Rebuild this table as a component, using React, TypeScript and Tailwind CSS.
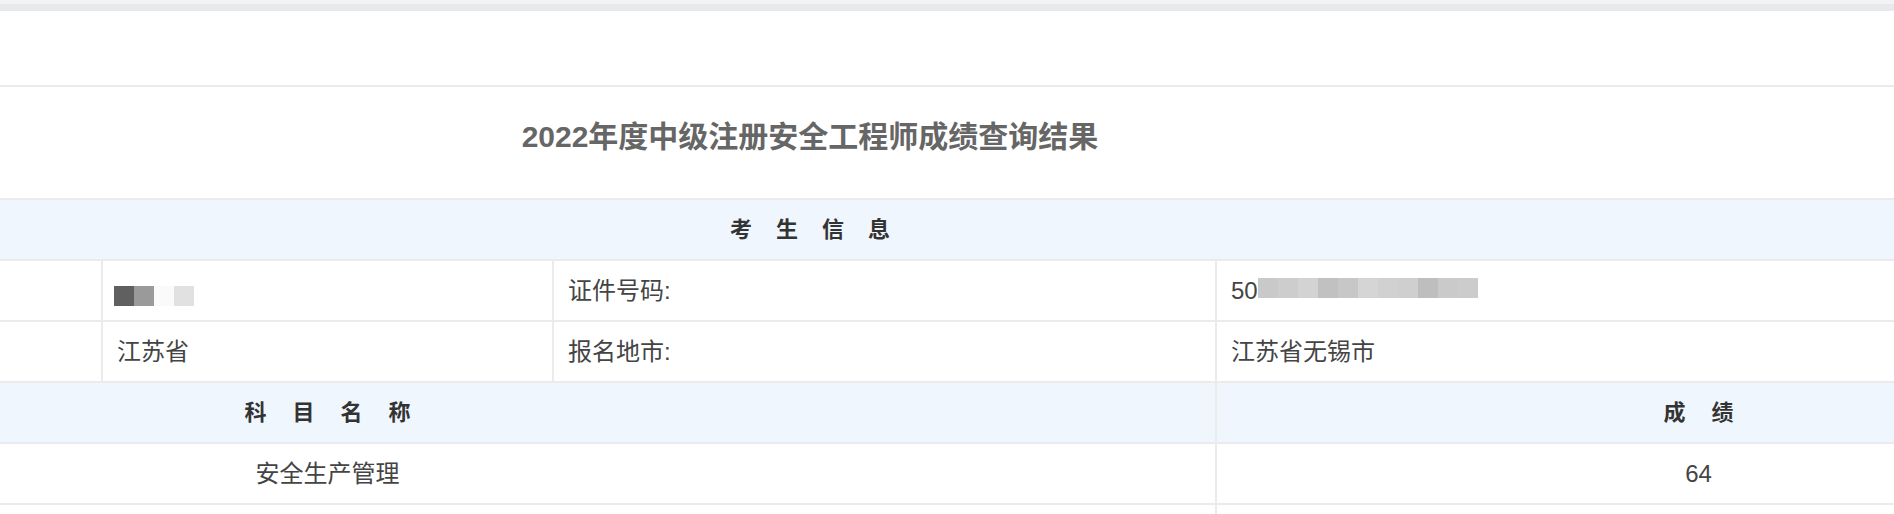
import React from 'react';

const nameBlocks = ['#606060', '#9a9a9a', '#fafafa', '#e1e1e1'];
const idBlocks = ['#c9c9c9', '#cdcdcd', '#d3d3d3', '#c1c1c1', '#c7c7c7', '#d5d5d5', '#d1d1d1', '#cfcfcf', '#bebebe', '#cacaca', '#cccccc'];

const Cell: React.FC<{ children?: React.ReactNode; first?: boolean }> = ({ children, first }) => (
  <div className={`flex items-center pl-[14px] text-[24px] leading-none text-[#444] ${first ? '' : 'border-l-2 border-[#ebebeb]'}`}>
    {children}
  </div>
);

const Blocks: React.FC<{ colors: string[] }> = ({ colors }) => (
  <div className="flex">
    {colors.map((c, i) => (
      <span key={i} className="block w-[20px] h-[20px]" style={{ backgroundColor: c }} />
    ))}
  </div>
);

const scores = [
  { subject: '安全生产管理', score: '64' },
  { subject: '', score: '' },
];

export default function App() {
  return (
    <div className="w-full h-[514px] overflow-hidden bg-white font-['Liberation_Sans','Noto_Sans_CJK_SC',sans-serif]">
      <div className="h-[4px] bg-[#f3f3f3]" />
      <div className="h-[7px] bg-[#e8e9eb]" />

      {/* table is wider than the window and centred on x=810 */}
      <div className="ml-[-560px] w-[2740px]">
        <div className="h-[76px] border-b-2 border-[#ebebeb]" />

        <div className="h-[113px] border-b-2 border-[#ebebeb] flex items-center justify-center pb-[12px]">
          <h1 className="text-[30px] leading-none font-bold text-[#666]">2022年度中级注册安全工程师成绩查询结果</h1>
        </div>

        {/* 考生信息 */}
        <div className="h-[61px] border-b-2 border-[#ebebeb] bg-[#eff6fd] flex items-center justify-center">
          <span className="text-[22px] leading-none font-bold text-[#333] tracking-[24px] pl-[24px]">考生信息</span>
        </div>

        <div className="grid grid-cols-[661px_451px_663px_965px] h-[61px] border-b-2 border-[#ebebeb]">
          <Cell first />
          <Cell>
            <div className="-ml-[3px] mt-[11px]">
              <Blocks colors={nameBlocks} />
            </div>
          </Cell>
          <Cell>证件号码:</Cell>
          <Cell>
            <span>50</span>
            <div className="-mt-[5px]">
              <Blocks colors={idBlocks} />
            </div>
          </Cell>
        </div>

        <div className="grid grid-cols-[661px_451px_663px_965px] h-[61px] border-b-2 border-[#ebebeb]">
          <Cell first />
          <Cell>江苏省</Cell>
          <Cell>报名地市:</Cell>
          <Cell>江苏省无锡市</Cell>
        </div>

        {/* 成绩 */}
        <div className="grid grid-cols-[1775px_965px] h-[61px] border-b-2 border-[#ebebeb] bg-[#eff6fd]">
          <div className="flex items-center justify-center">
            <span className="text-[22px] leading-none font-bold text-[#333] tracking-[26px] pl-[26px]">科目名称</span>
          </div>
          <div className="flex items-center justify-center border-l-2 border-[#ebebeb]">
            <span className="text-[22px] leading-none font-bold text-[#333] tracking-[26px] pl-[26px]">成绩</span>
          </div>
        </div>

        {scores.map((s, i) => (
          <div key={i} className="grid grid-cols-[1775px_965px] h-[61px] border-b-2 border-[#ebebeb]">
            <div className="flex items-center justify-center text-[24px] leading-none text-[#444]">{s.subject}</div>
            <div className="flex items-center justify-center border-l-2 border-[#ebebeb] text-[24px] leading-none text-[#444]">
              {s.score}
            </div>
          </div>
        ))}
      </div>
    </div>
  );
}
